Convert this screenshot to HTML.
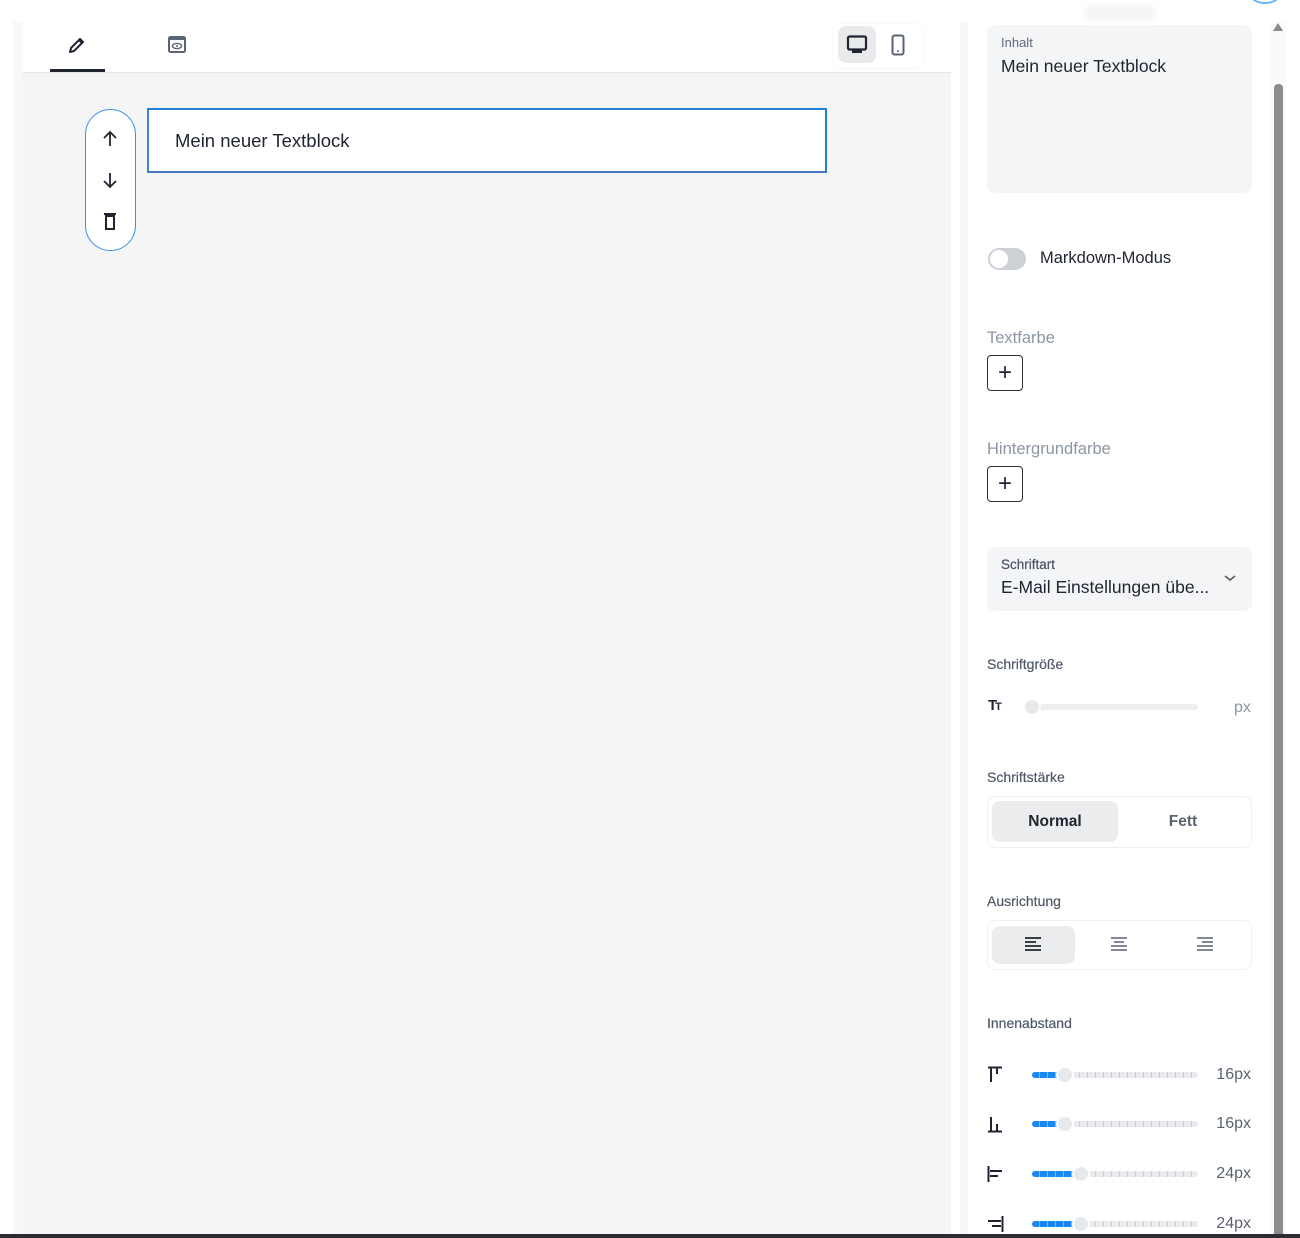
<!DOCTYPE html>
<html><head><meta charset="utf-8"><style>
*{box-sizing:border-box;margin:0;padding:0}
body{width:1300px;height:1238px;overflow:hidden;background:#fff;font-family:"Liberation Sans",sans-serif;position:relative;color:#1f2430}
.a{position:absolute}
.lbl{position:absolute;font-size:14px;color:#4f5966;font-weight:500;-webkit-text-stroke:0.2px #4f5966}
.track{position:absolute;height:6px;border-radius:3px;background:repeating-linear-gradient(90deg,#e9ebee 0 7px,#c9ccd1 7px 8px)}
.fill{position:absolute;height:6px;border-radius:3px;background:repeating-linear-gradient(90deg,#1a88f0 0 7px,#7fb8f2 7px 8px)}
.thumb{position:absolute;width:14px;height:14px;border-radius:50%;background:#e8e9eb;box-shadow:0 0 0 2px #fff,0 1px 2px rgba(0,0,0,.2)}
.val{position:absolute;font-size:16px;color:#5a6270;right:49px}
</style></head><body>
<div class="a" style="left:13px;top:22px;width:10px;height:1212px;background:#f7f8f9"></div>
<div class="a" style="left:23px;top:22px;width:928px;height:50px;background:#fff"></div>
<div class="a" style="left:23px;top:72px;width:928px;height:1162px;background:#f5f5f5;border-top:1px solid #e6e6e6"></div>
<div class="a" style="left:50px;top:69px;width:55px;height:3px;background:#1f2430"></div>
<svg class="a" style="left:66px;top:34px" width="22" height="22" viewBox="0 0 22 22"><path d="M4 18l1-4 9-9 3 3-9 9z M13 6l3 3" fill="none" stroke="#1f2430" stroke-width="2" stroke-linejoin="round"/></svg>
<svg class="a" style="left:167px;top:35px" width="20" height="20" viewBox="0 0 20 20"><rect x="2" y="2" width="16" height="15" rx="1.5" fill="none" stroke="#5a6473" stroke-width="2"/><rect x="2" y="2" width="16" height="3" fill="#5a6473"/><ellipse cx="10" cy="11" rx="4.5" ry="2.6" fill="none" stroke="#5a6473" stroke-width="1.4"/><circle cx="10" cy="11" r="1" fill="#5a6473"/></svg>
<div class="a" style="left:833px;top:24px;width:90px;height:44px;border-radius:8px;box-shadow:0 0 3px rgba(0,0,0,.06)"></div>
<div class="a" style="left:838px;top:26px;width:38px;height:37px;border-radius:8px;background:#e9eaec"></div>
<svg class="a" style="left:846px;top:35px" width="22" height="20" viewBox="0 0 22 20"><rect x="2" y="1.5" width="18" height="13" rx="1.5" fill="none" stroke="#1f2430" stroke-width="2.2"/><rect x="6" y="15" width="10" height="3" fill="#1f2430"/></svg>
<svg class="a" style="left:890px;top:34px" width="16" height="22" viewBox="0 0 16 22"><rect x="2.5" y="1.5" width="11" height="19" rx="2" fill="none" stroke="#5a6473" stroke-width="2"/><circle cx="8" cy="17" r="1" fill="#5a6473"/></svg>
<div class="a" style="left:85px;top:109px;width:51px;height:142px;border:1px solid #3d8fe8;border-radius:26px;background:#fff"></div>
<svg class="a" style="left:100px;top:129px" width="20" height="20" viewBox="0 0 20 20"><path d="M10 17V3M4 9l6-6 6 6" fill="none" stroke="#1f2430" stroke-width="1.8"/></svg>
<svg class="a" style="left:100px;top:170px" width="20" height="20" viewBox="0 0 20 20"><path d="M10 3v14M4 11l6 6 6-6" fill="none" stroke="#1f2430" stroke-width="1.8"/></svg>
<svg class="a" style="left:100px;top:211px" width="20" height="20" viewBox="0 0 20 20"><rect x="6" y="5" width="8" height="13" fill="none" stroke="#1f2430" stroke-width="2"/><rect x="4" y="2" width="12" height="2" fill="#1f2430"/></svg>
<div class="a" style="left:147px;top:108px;width:680px;height:65px;border:2px solid #1f7fd3;border-bottom-color:#4479c4;border-left-color:#3c83d8;background:#fff"></div>
<div class="a" style="left:175px;top:130px;font-size:18.5px;color:#1f2430">Mein neuer Textblock</div>
<div class="a" style="left:960px;top:22px;width:8px;height:1212px;background:#f7f8f9"></div>
<div class="a" style="left:1085px;top:6px;width:70px;height:14px;border-radius:7px;background:#f3f3f3;filter:blur(3px)"></div>
<div class="a" style="left:1250px;top:-14px;width:30px;height:18px;border-radius:50%;border:2px solid #6fb6f0;border-top:none"></div>
<div class="a" style="left:1270px;top:22px;width:16px;height:1212px;background:#fafafa"></div>
<div class="a" style="left:1273px;top:23px;width:0;height:0;border-left:5px solid transparent;border-right:5px solid transparent;border-bottom:8px solid #8a8a8a"></div>
<div class="a" style="left:1274px;top:84px;width:9px;height:1150px;border-radius:4px 4px 0 0;background:#8c8c8c"></div>
<div class="a" style="left:987px;top:25px;width:265px;height:168px;border-radius:8px;background:#f4f5f7"></div>
<div class="a" style="left:1001px;top:35px;font-size:13px;color:#5f6b7a">Inhalt</div>
<div class="a" style="left:1001px;top:56px;font-size:17.5px;color:#1f2430">Mein neuer Textblock</div>
<div class="a" style="left:988px;top:248px;width:38px;height:22px;border-radius:11px;background:#cdd1d6"></div>
<div class="a" style="left:990px;top:250px;width:18px;height:18px;border-radius:50%;background:#fff"></div>
<div class="a" style="left:1040px;top:249px;font-size:16.5px;color:#1f2430">Markdown-Modus</div>
<div class="a" style="left:987px;top:329px;font-size:16.5px;color:#8c96a3">Textfarbe</div>
<div class="a" style="left:987px;top:355px;width:36px;height:36px;border:1px solid #2a2f38;border-radius:4px;font-size:24px;line-height:34px;text-align:center;color:#1f2430">+</div>
<div class="a" style="left:987px;top:440px;font-size:16.5px;color:#8c96a3">Hintergrundfarbe</div>
<div class="a" style="left:987px;top:466px;width:36px;height:36px;border:1px solid #2a2f38;border-radius:4px;font-size:24px;line-height:34px;text-align:center;color:#1f2430">+</div>
<div class="a" style="left:987px;top:547px;width:265px;height:64px;border-radius:8px;background:#f4f5f7"></div>
<div class="a" style="left:1001px;top:557px;font-size:13.5px;color:#4a5260;-webkit-text-stroke:0.2px #4a5260">Schriftart</div>
<div class="a" style="left:1001px;top:577px;font-size:17.5px;color:#1f2430">E-Mail Einstellungen übe...</div>
<svg class="a" style="left:1223px;top:573px" width="14" height="10" viewBox="0 0 14 10"><path d="M2 3l5 4 5-4" fill="none" stroke="#555" stroke-width="1.5"/></svg>
<div class="lbl" style="left:987px;top:656px">Schriftgröße</div>
<div class="a" style="left:988px;top:697px;font-size:15px;font-weight:bold;color:#1f2430;letter-spacing:-2px">T<span style="font-size:11px">T</span></div>
<div class="a" style="left:1026px;top:704px;width:172px;height:6px;border-radius:3px;background:#eceef0"></div>
<div class="thumb" style="left:1025px;top:700px"></div>
<div class="a" style="left:1234px;top:699px;font-size:16px;color:#8c96a3">px</div>
<div class="lbl" style="left:987px;top:769px">Schriftstärke</div>
<div class="a" style="left:987px;top:796px;width:265px;height:52px;border:1px solid #f0f1f3;border-radius:8px"></div>
<div class="a" style="left:992px;top:801px;width:126px;height:41px;border-radius:8px;background:#ebecee;font-size:15.5px;font-weight:bold;text-align:center;line-height:41px;color:#1f2430">Normal</div>
<div class="a" style="left:1120px;top:801px;width:126px;height:41px;font-size:15.5px;font-weight:bold;text-align:center;line-height:41px;color:#5a6270">Fett</div>
<div class="lbl" style="left:987px;top:893px">Ausrichtung</div>
<div class="a" style="left:987px;top:920px;width:265px;height:50px;border:1px solid #f0f1f3;border-radius:8px"></div>
<div class="a" style="left:992px;top:926px;width:83px;height:38px;border-radius:8px;background:#ebecee"></div>
<svg class="a" style="left:1024px;top:936px" width="18" height="18" viewBox="0 0 18 18"><path d="M1 2h16M1 6h11M1 10h16M1 14h16" stroke="#1f2430" stroke-width="1.8"/></svg>
<svg class="a" style="left:1110px;top:936px" width="18" height="18" viewBox="0 0 18 18"><path d="M1 2h16M4 6h10M1 10h16M1 14h16" stroke="#5a6270" stroke-width="1.6"/></svg>
<svg class="a" style="left:1196px;top:936px" width="18" height="18" viewBox="0 0 18 18"><path d="M1 2h16M6 6h11M1 10h16M1 14h16" stroke="#5a6270" stroke-width="1.6"/></svg>
<div class="lbl" style="left:987px;top:1015px">Innenabstand</div>
<svg class="a" style="left:987px;top:1066px" width="18" height="18" viewBox="0 0 18 18"><path d="M1 1.5h14M4 2v14M10 2v6" stroke="#1f2430" stroke-width="2"/></svg>
<div class="track" style="left:1032px;top:1072px;width:166px"></div><div class="fill" style="left:1032px;top:1072px;width:28px"></div><div class="thumb" style="left:1058px;top:1068px"></div><div class="val" style="top:1066px">16px</div>
<svg class="a" style="left:987px;top:1115px" width="18" height="18" viewBox="0 0 18 18"><path d="M1 16.5h14M4 2v14M10 9v7" stroke="#1f2430" stroke-width="2"/></svg>
<div class="track" style="left:1032px;top:1121px;width:166px"></div><div class="fill" style="left:1032px;top:1121px;width:28px"></div><div class="thumb" style="left:1058px;top:1117px"></div><div class="val" style="top:1115px">16px</div>
<svg class="a" style="left:987px;top:1165px" width="18" height="18" viewBox="0 0 18 18"><path d="M1.5 1v16M3 6h12M3 11h8" stroke="#1f2430" stroke-width="2"/></svg>
<div class="track" style="left:1032px;top:1171px;width:166px"></div><div class="fill" style="left:1032px;top:1171px;width:44px"></div><div class="thumb" style="left:1074px;top:1167px"></div><div class="val" style="top:1165px">24px</div>
<svg class="a" style="left:987px;top:1215px" width="18" height="18" viewBox="0 0 18 18"><path d="M15.5 1v16M1 6h13M5 11h9" stroke="#1f2430" stroke-width="2"/></svg>
<div class="track" style="left:1032px;top:1221px;width:166px"></div><div class="fill" style="left:1032px;top:1221px;width:44px"></div><div class="thumb" style="left:1074px;top:1217px"></div><div class="val" style="top:1215px">24px</div>
<div class="a" style="left:0;top:1234px;width:1300px;height:4px;background:#2b2d30"></div>
</body></html>
